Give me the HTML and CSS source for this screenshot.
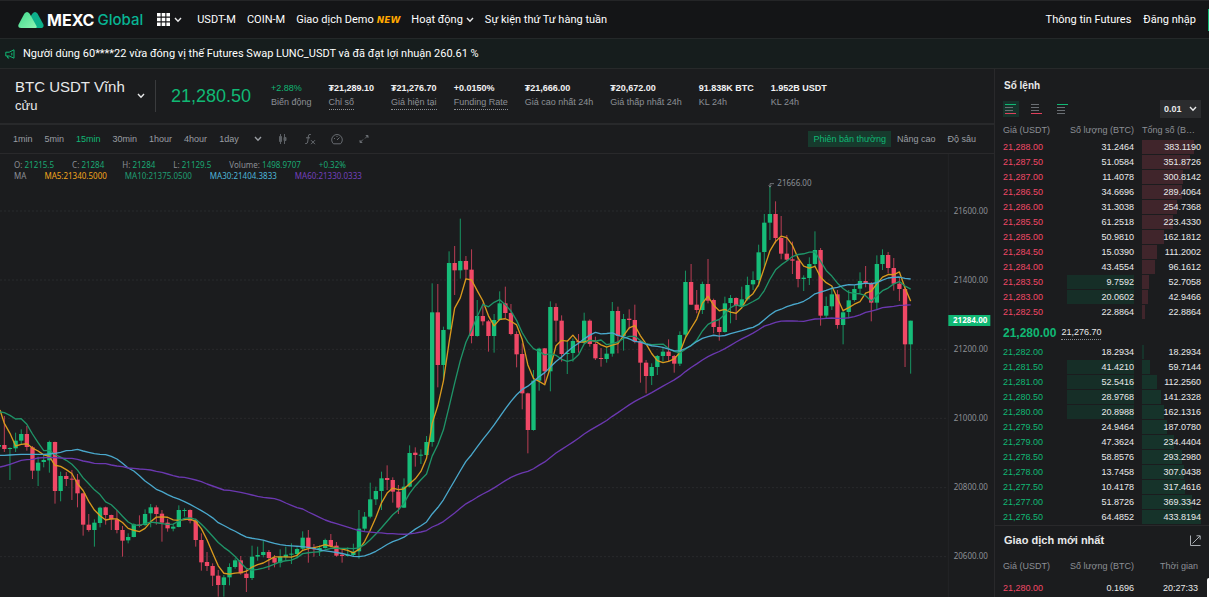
FILE: index.html
```html
<!DOCTYPE html>
<html lang="vi">
<head>
<meta charset="utf-8">
<meta name="viewport" content="width=device-width, initial-scale=1">
<title>BTC USDT Vĩnh cửu | MEXC Global</title>
<link rel="stylesheet" href="styles.css">
</head>
<body>
<header class="topbar">
  <a class="logo" href="#">
    <svg class="logo-mark" viewBox="0 0 26 16" aria-hidden="true">
      <defs>
        <linearGradient id="peak" x1="0" y1="0" x2="1" y2="1"><stop offset="0" stop-color="#3fd98c"/><stop offset="1" stop-color="#8ff5b4"/></linearGradient>
        <linearGradient id="ridge" x1="0" y1="0" x2="1" y2="1"><stop offset="0" stop-color="#0fae8c"/><stop offset="1" stop-color="#0bb088"/></linearGradient>
      </defs>
      <path fill="url(#ridge)" d="M11 7 14.3 1.8Q17 -1.6 19.6 1.8L25.3 12.2Q26.4 16 22.6 16H14Z"/>
      <path fill="url(#peak)" d="M.6 12.4 6.3 1.8Q9 -1.6 11.7 1.8L18.6 14.2Q19.2 16 17.4 16H3Q-.8 16 .6 12.4Z"/>
    </svg>
    <span class="logo-name">MEXC</span><span class="logo-sub">Global</span>
  </a>
  <button class="apps" aria-label="Menu">
    <svg width="13" height="13" viewBox="0 0 13 13" fill="#fff"><path d="M0 0h3.6v3.6H0zM4.7 0h3.6v3.6H4.7zM9.4 0H13v3.6H9.4zM0 4.7h3.6v3.6H0zM4.7 4.7h3.6v3.6H4.7zM9.4 4.7H13v3.6H9.4zM0 9.4h3.6V13H0zM4.7 9.4h3.6V13H4.7zM9.4 9.4H13V13H9.4z"/></svg>
    <svg class="chev" viewBox="0 0 8 6"><path d="m1 1 3 3.2L7 1"/></svg>
  </button>
  <nav class="menu">
    <a href="#">USDT-M</a>
    <a href="#">COIN-M</a>
    <a href="#">Giao dịch Demo <em class="new">NEW</em></a>
    <a href="#">Hoạt động <svg class="chev" viewBox="0 0 8 6"><path d="m1 1 3 3.2L7 1"/></svg></a>
    <a href="#">Sự kiện thứ Tư hàng tuần</a>
  </nav>
  <nav class="account">
    <a href="#">Thông tin Futures</a>
    <a href="#">Đăng nhập</a>
    <button class="register" aria-label="Đăng ký"></button>
  </nav>
</header>

<div class="notice">
  <svg width="10" height="10" viewBox="0 0 10 10" fill="none" stroke="#10b874" stroke-linejoin="round"><path d="M9 .8v8.400L4.200 7H.8V3.200h3.400ZM6.800 3.800v2.600M2.200 7l.6 2h1.400"/></svg>
  <p>Người dùng 60****22 vừa đóng vị thế Futures Swap LUNC_USDT và đã đạt lợi nhuận 260.61 %</p>
</div>

<main class="trade">
  <section class="market">
    <div class="summary">
      <button class="pair"><span>BTC USDT Vĩnh <small>cửu</small></span><svg class="chev" viewBox="0 0 8 6"><path d="m1 1 3 3.2L7 1"/></svg></button>
      <strong class="last">21,280.50</strong>
      <dl class="stats">
        <div class="change"><dd>+2.88%</dd><dt>Biến động</dt></div>
        <div><dd>₮21,289.10</dd><dt><u>Chỉ số</u></dt></div>
        <div><dd>₮21,276.70</dd><dt><u>Giá hiện tại</u></dt></div>
        <div><dd>+0.0150%</dd><dt><u>Funding Rate</u></dt></div>
        <div><dd>₮21,666.00</dd><dt>Giá cao nhất 24h</dt></div>
        <div><dd>₮20,672.00</dd><dt>Giá thấp nhất 24h</dt></div>
        <div><dd>91.838K BTC</dd><dt>KL 24h</dt></div>
        <div><dd>1.952B USDT</dd><dt>KL 24h</dt></div>
      </dl>
    </div>

    <div class="toolbar">
      <div class="frames">
        <button>1min</button><button>5min</button><button class="on">15min</button><button>30min</button><button>1hour</button><button>4hour</button><button>1day</button>
      </div>
      <div class="tools">
        <button aria-label="Thêm"><svg class="chev" viewBox="0 0 8 6"><path d="m1 1 3 3.2L7 1"/></svg></button>
        <button aria-label="Kiểu nến"><svg width="12" height="12" viewBox="0 0 12 12" fill="#5c6065" stroke="#5c6065"><path d="M3.500 1v10M7.500 1v10"/><path d="M2.500 3.500h2v5h-2zM7 4.500h2v3H7z"/></svg></button>
        <button aria-label="Chỉ báo"><svg width="12" height="12" viewBox="0 0 12 12" fill="none" stroke="#686c71"><path d="M6.800 1.500Q4.600.8 4.400 3L3.700 9Q3.400 11 1.200 10.600M2 4.800h4M7 7.200l4 4M11 7.200l-4 4"/></svg></button>
        <button aria-label="Giao diện"><svg width="12" height="12" viewBox="0 0 12 12" fill="none" stroke="#686c71"><path d="M2.500 10.800A5.300 5.300 0 1 1 9.500 10.800ZM6 7l2.500-2.500M3 5.500h1M5.500 3.500h1"/></svg></button>
        <button aria-label="Toàn màn hình"><svg width="12" height="12" viewBox="0 0 12 12" fill="#686c71" stroke="#686c71"><path d="M8 2.500h2v2ZM9 3.500l-2 2M4 9.500H2v-2ZM3 8.500l2-2"/></svg></button>
      </div>
      <div class="views">
        <button class="active">Phiên bản thường</button><button>Nâng cao</button><button>Độ sâu</button>
      </div>
    </div>

    <div class="chart">
      <svg id="plot" viewBox="0 462 2982 1329" preserveAspectRatio="xMinYMin meet" role="img" aria-label="Biểu đồ nến BTC USDT 15 phút"></svg>
      <div class="legend">
        <p><span>O: <b>21215.5</b></span><span>C: <b>21284</b></span><span>H: <b>21284</b></span><span>L: <b>21129.5</b></span><span>Volume: <b>1498.9707</b></span><b>+0.32%</b></p>
        <p><span>MA</span><span class="ma5">MA5:21340.5000</span><span class="ma10">MA10:21375.0500</span><span class="ma30">MA30:21404.3833</span><span class="ma60">MA60:21330.0333</span></p>
      </div>
    </div>
  </section>

  <aside class="side">
    <section class="book">
      <h2>Sổ lệnh</h2>
      <div class="book-tools">
        <button class="mode on" aria-label="Tất cả"><svg viewBox="0 0 12 12"><path stroke="#10b874" d="M1 1.500h11"/><path stroke="#6b6f74" d="M1 4.500h8M1 7.500h8"/><path stroke="#e0405c" d="M1 10.500h11"/></svg></button>
        <button class="mode" aria-label="Lệnh bán"><svg viewBox="0 0 12 12"><path stroke="#6b6f74" d="M1 1.500h8M1 4.500h8M1 7.500h8"/><path stroke="#e0405c" d="M1 10.500h11"/></svg></button>
        <button class="mode" aria-label="Lệnh mua"><svg viewBox="0 0 12 12"><path stroke="#10b874" d="M1 1.500h11"/><path stroke="#6b6f74" d="M1 4.500h8M1 7.500h8M1 10.500h8"/></svg></button>
        <label class="step"><select aria-label="Độ chính xác"><option>0.01</option><option>0.1</option></select><svg class="chev" viewBox="0 0 8 6"><path d="m1 1 3 3.2L7 1"/></svg></label>
      </div>
      <table class="orders asks">
        <thead><tr><th>Giá (USDT)</th><th>Số lượng (BTC)</th><th class="cut">Tổng số (BTC)</th></tr></thead>
        <tbody id="asks"></tbody>
      </table>
      <p class="mid"><strong>21,280.00</strong><span>21,276.70</span></p>
      <table class="orders bids">
        <tbody id="bids"></tbody>
      </table>
    </section>
    <section class="trades">
      <div class="trades-head">
        <h2>Giao dịch mới nhất</h2>
        <button aria-label="Mở rộng"><svg width="11" height="11" viewBox="0 0 11 11" fill="none" stroke="#a9adb2"><path d="M.5.500v10h10M2.500 8.500l7.500-7.500M6.500.800h3.700v3.700"/></svg></button>
      </div>
      <table class="orders latest">
        <thead><tr><th>Giá (USDT)</th><th>Số lượng (BTC)</th><th>Thời gian</th></tr></thead>
        <tbody><tr><td>21,280.00</td><td>0.1696</td><td>20:27:33</td></tr></tbody>
      </table>
    </section>
  </aside>
</main>
<div class="help-tab"></div>
<script src="app.js"></script>
</body>
</html>
```
FILE: styles.css
```css
* { box-sizing: border-box; }
body {
  margin: 0;
  height: 100vh;
  overflow: hidden;
  display: flex;
  flex-direction: column;
  background: #1b1c1e;
  color: #e8e9ea;
  font: 9px/12px "Liberation Sans", Arial, sans-serif;
}
h2, p, dl, dd { margin: 0; }
a { color: inherit; text-decoration: none; }
button, select {
  margin: 0;
  padding: 0;
  border: 0;
  background: none;
  color: inherit;
  font: inherit;
}
svg { display: block; flex: none; }
.chev { width: 8px; height: 6px; fill: none; stroke: #e8e9ea; stroke-width: 1.4; }

.topbar {
  flex: none;
  display: flex;
  align-items: center;
  height: 38px;
  padding-left: 18px;
  border-top: 1px solid #242527;
  background: #141517;
  color: #fff;
  font: 11px/14px Roboto, "Liberation Sans", sans-serif;
}
.logo { display: flex; align-items: center; padding-top: 1px; font: 15px/18px Inter, sans-serif; }
.logo-mark { width: 26px; height: 16px; margin-right: 3px; }
.logo-name { margin-right: 3px; font-size: 16px; font-weight: 700; }
.logo-sub { font-weight: 500; color: #08b493; }
.apps { display: flex; align-items: center; gap: 4px; margin: 0 15px 0 14px; }
.menu { display: flex; gap: 11px; }
.menu a { display: flex; align-items: center; gap: 3px; }
.new { color: #ffa800; font: italic 700 9px/12px "DejaVu Sans", sans-serif; }
.account { display: flex; align-items: center; gap: 12px; margin-left: auto; }
.register { width: 1px; height: 22px; background: #10b874; }

.notice {
  flex: none;
  display: flex;
  align-items: center;
  gap: 8px;
  height: 31px;
  padding-left: 5px;
  border-top: 1px solid #242829;
  border-bottom: 1px solid #27292a;
  background: #161d1d;
  color: #fff;
  font: 11px/14px Roboto, "Liberation Sans", sans-serif;
}

.trade { flex: 1; min-height: 0; display: grid; grid-template-columns: minmax(0, 1fr) 215px; }
.market { display: flex; flex-direction: column; min-width: 0; min-height: 0; }

.summary { flex: none; display: flex; align-items: center; height: 56px; padding-left: 15px; border-bottom: 2px solid #28292b; }
.pair { display: flex; align-items: center; gap: 9px; width: 141px; height: 32px; padding-right: 10px; border-right: 1px solid #3a3b3d; font-size: 15px; line-height: 18px; text-align: left; }
.pair span { flex: 1; }
.pair small { font-size: 13px; }
.last { width: 99px; padding-left: 15px; font-size: 18px; line-height: 22px; font-weight: 400; color: #10b874; }
.stats { display: flex; gap: 17px; padding-left: 16px; white-space: nowrap; }
.stats div { display: flex; flex-direction: column; }
.stats dd { font-weight: 700; line-height: 13px; color: #f2f2f3; }
.stats dt { line-height: 14px; color: #8b8f95; }
.stats u { display: inline-block; text-decoration: none; line-height: 13px; border-bottom: 1px dotted #8b8f95; }
.stats .change dd { font-weight: 400; color: #10b874; }

.toolbar { flex: none; display: flex; align-items: center; height: 29px; padding: 0 18px 0 13px; border-bottom: 1px solid #29292b; color: #9a9ea3; }
.toolbar .chev { stroke: #9a9ea3; }
.frames { display: flex; gap: 12px; }
.frames .on { color: #10b874; }
.tools { display: flex; align-items: center; gap: 15px; margin-left: 15px; }
.views { display: flex; align-items: center; gap: 12px; margin-left: auto; }
.views .active { height: 16px; padding: 0 5px; margin-right: -6px; background: #173a2d; color: #10b874; }

.chart { flex: 1; min-height: 0; position: relative; overflow: hidden; font: 8px/11px "Noto Sans", sans-serif; }
.chart svg { width: 100%; }
.legend { position: absolute; left: 14px; top: 5px; color: #8b8f95; }
.legend p { display: flex; gap: 18px; }
.legend b { font-weight: 400; color: #1aa873; }
.legend .ma5 { color: #f0a41d; }
.legend .ma10 { color: #1f9e72; }
.legend .ma30 { color: #4db4d8; }
.legend .ma60 { color: #7340bd; }
.grid { stroke: #292a2c; stroke-width: 3; stroke-dasharray: 6 6; }
.axis { stroke: #242527; stroke-width: 3; }
.up { fill: #16bd79; stroke: #16bd79; }
.down { fill: #f04866; stroke: #f04866; }
.wick { stroke-width: 3; opacity: .75; }
.body { stroke: none; }
.line { fill: none; stroke-width: 4; stroke-linejoin: round; }
.line.ma5 { stroke: #d99a1e; }
.line.ma10 { stroke: #1f9468; }
.line.ma30 { stroke: #4aa8cc; }
.line.ma60 { stroke: #6b38b0; }
.tick { font-size: 24px; fill: #8b8f95; }
.tag { fill: #10b874; }
.tag-text { font-size: 24px; font-weight: 700; fill: #fff; }
.pointer { fill: none; stroke: #9a9ea3; stroke-width: 2; }

.side { display: flex; flex-direction: column; min-height: 0; border-left: 1px solid #29292b; }
h2 { padding-left: 1px; font-size: 10px; line-height: 14px; }
.book { padding: 10px 8px 0; border-bottom: 1px solid #29292b; }
.book-tools { display: flex; align-items: center; gap: 10px; height: 18px; margin: 7px 0 5px; }
.mode { padding: 1px; width: 16px; height: 16px; }
.mode.on { background: #17332b; }
.mode svg { width: 12px; height: 12px; }
.step { display: flex; align-items: center; width: 41px; height: 18px; margin-left: auto; padding: 0 4px; background: #2b2c2e; font-weight: 700; }
.step select { flex: 1; min-width: 0; appearance: none; }
.orders { width: 198px; border-collapse: collapse; table-layout: fixed; line-height: 15px; }
.orders th { width: 67px; padding: 0; height: 15px; font-weight: 400; color: #8b8f95; text-align: right; white-space: nowrap; }
.orders th:first-child, .orders td:first-child { width: 64px; text-align: left; }
.orders td { height: 15px; padding: 0; text-align: right; vertical-align: top; color: #e8e9ea; }
.orders td:nth-child(2) { width: 67px; }
.orders .cut { padding: 0 5px 0 8px; text-align: left; overflow: hidden; text-overflow: ellipsis; }
.asks td:first-child, .latest td:first-child { color: #f04866; }
.bids td:first-child { color: #10b874; }
.orders .hit { background: linear-gradient(#162e27, #162e27) 0 0 / 100% 14px no-repeat; }
.depth { position: relative; display: block; height: 15px; margin-left: 8px; }
.depth i { position: absolute; left: 0; top: 0; height: 14px; z-index: -1; }
.asks .depth i { background: #40252b; }
.bids .depth i { background: #16332a; }
.asks thead th { height: 17px; vertical-align: top; }
.mid { display: flex; align-items: center; gap: 5px; height: 25px; }
.mid strong { font-size: 12px; color: #10b874; }
.mid span { border-bottom: 1px dotted #8b8f95; line-height: 14px; }
.trades { padding: 7px 8px 0; }
.trades-head { display: flex; justify-content: space-between; align-items: center; width: 198px; margin-bottom: 11px; }
.trades-head h2 { font-size: 11px; }
.latest thead th { height: 17px; }
.latest td { height: 26px; vertical-align: middle; }
.latest th:last-child, .latest td:last-child { padding-right: 3px; }

.help-tab { position: fixed; right: 0; bottom: 0; width: 2px; height: 19px; border-radius: 2px 0 0 0; background: #fff; }
```
FILE: app.js
```js
/* Order book: price, amount, running total, and 1 when the amount is highlighted. */
const asks = [
  ["21,288.00", "31.2464", "383.1190"], ["21,287.50", "51.0584", "351.8726"],
  ["21,287.00", "11.4078", "300.8142"], ["21,286.50", "34.6696", "289.4064"],
  ["21,286.00", "31.3038", "254.7368"], ["21,285.50", "61.2518", "223.4330"],
  ["21,285.00", "50.9810", "162.1812"], ["21,284.50", "15.0390", "111.2002"],
  ["21,284.00", "43.4554", "96.1612"], ["21,283.50", "9.7592", "52.7058", 1],
  ["21,283.00", "20.0602", "42.9466", 1], ["21,282.50", "22.8864", "22.8864"]
];
const bids = [
  ["21,282.00", "18.2934", "18.2934"], ["21,281.50", "41.4210", "59.7144", 1],
  ["21,281.00", "52.5416", "112.2560", 1], ["21,280.50", "28.9768", "141.2328", 1],
  ["21,280.00", "20.8988", "162.1316", 1], ["21,279.50", "24.9464", "187.0780"],
  ["21,279.00", "47.3624", "234.4404"], ["21,278.50", "58.8576", "293.2980"],
  ["21,278.00", "13.7458", "307.0438"], ["21,277.50", "10.4178", "317.4616"],
  ["21,277.00", "51.8726", "369.3342"], ["21,276.50", "64.4852", "433.8194"]
];
const deepest = 433.8194;
const fill = (id, rows) => {
  document.getElementById(id).innerHTML = rows.map(([price, amount, total, hit]) =>
    `<tr><td>${price}</td><td${hit ? ' class="hit"' : ""}>${amount}</td>` +
    `<td><span class="depth"><i style="width:${Math.round(total / deepest * 100)}%"></i>${total}</span></td></tr>`
  ).join("");
};
fill("asks", asks);
fill("bids", bids);

/* Candles: direction, high, body top, body bottom, low; each block has its own vertical base. */
const blocks = [
  [1170, `r 78 165 177 186,g 172 174 177 270,g 128 152 175 186,g 118 132 152 165,r 108 132 171 182,r 168 172 242 267,
g 200 218 242 288,g 195 210 216 232,g 152 156 211 248,r 155 156 303 341,g 245 258 303 334,r 246 258 267 288,
r 240 266 269 330,r 252 269 310 352,r 308 310 404 437,r 372 404 420 425,g 388 398 420 470,g 350 353 399 412,
r 350 352 375 404,r 374 375 388 420,r 360 388 420 430,r 408 420 452 500,g 430 441 451 460,g 400 403 441 442,
r 376 404 408 412,g 358 372 405 408,g 342 352 370 412,r 346 352 372 404,r 360 371 398 455,r 386 398 415 425,
g 402 410 416 424,g 346 360 411 412,g 355 360 362 380,r 358 360 392 400,r 386 391 450 470,r 430 450 517 542,
r 486 516 528 543,r 520 528 557 588,r 540 557 585 620,g 555 562 585 620,g 520 531 562 586,g 505 511 531 536,
r 498 511 550 554,r 536 551 564 606,g 467 500 564 570,g 470 495 500 512,g 452 486 495 502,r 480 486 504 540,
r 495 504 518 532,g 478 500 518 532,g 470 494 502 510,g 460 491 494 522,g 472 477 492 505,g 424 443 476 480,
r 420 443 474 518,r 462 475 478 500,g 466 474 480 498,g 446 450 474 476,r 432 450 468 472,r 456 467 497 500,
r 480 494 498 518,g 472 494 498 500,g 461 485 495 500,g 360 416 484 506,g 366 380 416 425,g 278 328 380 385,
g 290 303 328 345,g 245 265 303 360,r 226 264 270 300,r 262 270 305 338,r 285 305 353 372,g 265 290 353 354,
g 166 189 290 292,r 172 188 195 230,g 178 194 197 222,g 138 156 195 198`],
  [600, `g 250 337 726 740,r 252 337 495 562,g 380 390 495 540,g 154 189 388 390,r 138 189 211 285,g 56 183 211 236,
r 168 183 209 240,r 148 209 408 430,g 300 348 408 410,r 310 348 364 376,r 360 364 408 455,g 342 360 408 458,
g 274 310 360 362,r 260 310 339 355,r 312 339 402 406,r 394 402 463 502,r 430 462 580 628,r 578 580 690 760,
g 510 542 690 692,g 443 446 542 572,r 444 445 514 550,g 304 321 514 574,r 310 321 362 425,r 346 362 462 485,
g 425 459 462 522,g 415 423 459 485,r 402 423 427 458,g 338 362 427 432,r 358 362 432 440,r 410 432 475 480,
r 444 474 477 500,g 440 461 477 488,g 306 333 461 470,r 320 333 408 460,g 342 357 408 452,r 328 356 360 388,
r 314 360 425 430,r 420 423 488 548,r 480 488 528 580,g 490 501 528 555`],
  [510, `g 555 558 591 615,g 533 545 558 575,r 508 545 558 575,r 555 558 581 608,g 484 495 581 588,g 302 336 494 500,
r 282 336 404 405,r 360 404 420 430,g 335 342 420 432,r 267 342 392 400,r 386 390 471 490,r 450 471 486 512,
g 380 400 486 488,g 375 384 399 460,r 382 384 408 450,g 350 388 410 415,g 320 345 388 392,g 304 330 343 360,
g 224 247 330 350,g 132 158 246 295,g 50 132 158 210,r 94 132 204 220,r 138 204 251 268,r 195 251 269 272,
r 215 268 272 312,r 262 272 327 352,g 316 323 327 363,g 262 282 324 345,g 184 240 282 292,r 234 240 437 467,
g 380 408 437 445,g 350 373 409 420,r 360 373 465 476,g 420 427 465 523,g 360 391 426 445,g 345 357 390 395,
g 307 333 356 370,r 288 333 339 352,r 336 342 398 454,g 256 282 398 420,g 238 255 282 300,r 246 255 294 310,
r 264 294 341 362,r 322 341 357 393,r 350 357 523 591,g 452 452 523 611`]
];
const candles = blocks.flatMap(([base, text]) => text.split(",").map(item => {
  const [side, ...values] = item.trim().split(" ");
  return [side, ...values.map(v => +v + base)];
}));
const x = i => 13 + 16.888 * i;
const close = candles.map(c => c[0] === "g" ? c[2] : c[3]);

/* Averages that reach back before the first visible candle start from stored values. */
const averages = {
  5: [100, 130, 168, 163],
  10: [68, 76, 87, 86, 103, 132, 158, 182, 181],
  30: [196, 195, 194, 193, 193, 193, 193, 193, 192, 190, 187, 182, 181, 178, 183, 187, 191, 193, 194, 199, 207, 220, 234, 243, 257, 273, 285, 298, 305],
  60: [228, 223, 217, 211, 209, 208, 204, 203, 202, 203, 204, 205, 205, 208, 213, 216, 220, 221, 221, 225, 228, 230, 234, 235, 237, 238, 240, 244, 247, 252, 257, 261, 262, 266, 270, 275, 282, 288, 294, 300, 301, 304, 307, 311, 315, 319, 322, 324, 326, 331, 339, 346, 353, 357, 366, 374, 382, 390, 396]
};
const edge = { 5: 60, 10: 66, 30: 196, 60: 231 };

let out = "";
[[633, "21600.00"], [840, "21400.00"], [1048, "21200.00"], [1255, "21000.00"], [1463, "20800.00"], [1670, "20600.00"]].forEach(([y, label]) => {
  out += `<path class="grid" d="M0 ${y}H2844"/><text class="tick" x="2861" y="${y + 8}">${label}</text>`;
});
out += '<path class="axis" d="M2845 462V1791"/>';
out += '<rect class="up body" x="-6" y="1335" width="9" height="5"/>';
candles.forEach(([side, high, top, bottom, low], i) => {
  const cls = side === "g" ? "up" : "down";
  const cx = x(i).toFixed(1);
  out += `<path class="wick ${cls}" d="M${cx} ${high}V${low}"/>`;
  out += `<rect class="body ${cls}" x="${(x(i) - 6.5).toFixed(1)}" y="${top}" width="13" height="${Math.max(3, bottom - top)}"/>`;
});
Object.entries(averages).forEach(([span, stored]) => {
  const n = +span;
  const points = [`0,${edge[n] + 1170}`];
  close.forEach((_, i) => {
    const y = i < stored.length ? stored[i] + 1170
      : close.slice(i - n + 1, i + 1).reduce((a, b) => a + b) / n;
    points.push(`${x(i).toFixed(1)},${y.toFixed(1)}`);
  });
  out += `<polyline class="line ma${n}" points="${points.join(" ")}"/>`;
});
out += '<path class="pointer" d="M2310 562V551H2322M2306 556l4 5 4-5"/><text class="tick" x="2332" y="557">21666.00</text>';
out += '<rect class="tag" x="2845" y="945" width="126" height="33"/><text class="tag-text" x="2859" y="970">21284.00</text>';
document.getElementById("plot").innerHTML = out;
```
